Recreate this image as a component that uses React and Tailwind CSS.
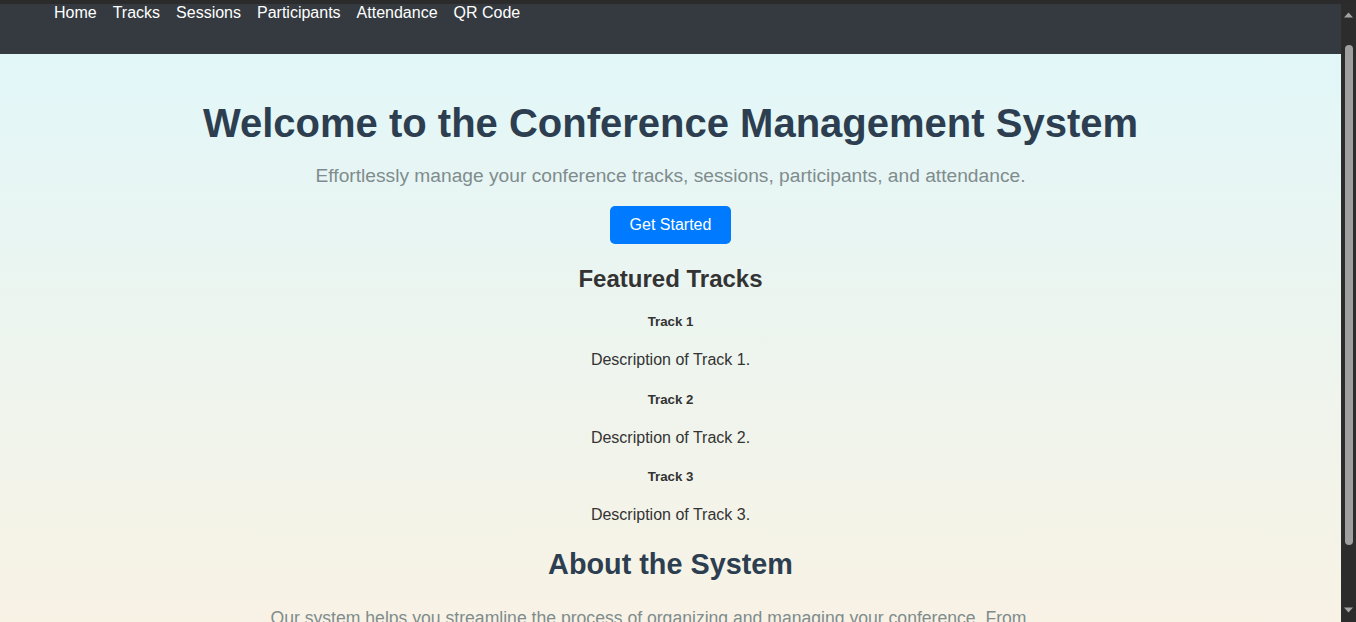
const links = ["Home", "Tracks", "Sessions", "Participants", "Attendance", "QR Code"];

const tracks = [
  { name: "Track 1", desc: "Description of Track 1.", gap: "mt-[21px]" },
  { name: "Track 2", desc: "Description of Track 2.", gap: "mt-[23px]" },
  { name: "Track 3", desc: "Description of Track 3.", gap: "mt-[22px]" },
];

function Scrollbar() {
  return (
    <div className="w-[15px] flex-shrink-0 bg-[#2c2c2c] flex flex-col items-center">
      <svg width="9" height="6" viewBox="0 0 9 6" className="mt-[8px]">
        <path d="M0 5.5 L4.5 0.5 L9 5.5 Z" fill="#a3a3a3" />
      </svg>
      <div className="mt-[27px] w-[8px] h-[500px] rounded-full bg-[#9f9f9f]" />
      <div className="flex-1" />
      <svg width="9" height="6" viewBox="0 0 9 6" className="mb-[9px]">
        <path d="M0 0.5 L4.5 5.5 L9 0.5 Z" fill="#a3a3a3" />
      </svg>
    </div>
  );
}

export default function App() {
  return (
    <div
      className="h-[622px] overflow-hidden flex flex-col"
      style={{ fontFamily: '"Liberation Sans", Arial, sans-serif' }}
    >
      <div className="h-[4px] flex-shrink-0 bg-[#2b2b2b]" />
      <div className="flex-1 flex min-h-0">
        <div className="flex-1 min-w-0 overflow-hidden">
          <div className="min-h-[760px] flex flex-col bg-gradient-to-b from-[#e0f7fa] to-[#fdf1e0]">
            {/* Navbar */}
            <nav className="h-[50px] flex-shrink-0 bg-[#343a40]">
              <ul className="flex gap-4 pl-[54px] text-[16px] leading-[18px] text-white">
                {links.map((l) => (
                  <li key={l}>
                    <a href="#" className="text-white">
                      {l}
                    </a>
                  </li>
                ))}
              </ul>
            </nav>

            {/* Hero */}
            <main className="flex flex-col items-center text-center">
              <h1 className="mt-[46px] text-[40px] leading-[46px] font-bold text-[#2c3e50]">
                Welcome to the Conference Management System
              </h1>
              <p className="mt-[19px] text-[19.2px] leading-[22px] text-[#7f8c8d]">
                Effortlessly manage your conference tracks, sessions, participants, and attendance.
              </p>
              <button className="mt-[19px] h-[38px] px-5 rounded-[5px] bg-[#007bff] text-white text-[16px] leading-[18px]">
                Get Started
              </button>

              {/* Featured tracks */}
              <h2 className="mt-[21px] text-[24px] leading-[28px] font-bold text-[#333333]">
                Featured Tracks
              </h2>
              <div className="flex flex-col items-center">
                {tracks.map((t) => (
                  <div key={t.name} className="flex flex-col items-center">
                    <h5 className={`${t.gap} text-[13.28px] leading-[15px] font-bold text-[#333333]`}>
                      {t.name}
                    </h5>
                    <p className="mt-[22px] text-[16px] leading-[18px] text-[#333333]">{t.desc}</p>
                  </div>
                ))}
              </div>

              {/* About */}
              <h2 className="mt-[24px] text-[28.8px] leading-[33px] font-bold text-[#2c3e50]">
                About the System
              </h2>
              <p className="mt-[24px] w-full max-w-[800px] text-left text-[17.6px] leading-[26px] text-[#7f8c8d]">
                Our system helps you streamline the process of organizing and managing your conference. From
                creating tracks and sessions to tracking participant attendance, everything is in one place.
              </p>
            </main>
          </div>
        </div>
        <Scrollbar />
      </div>
    </div>
  );
}
